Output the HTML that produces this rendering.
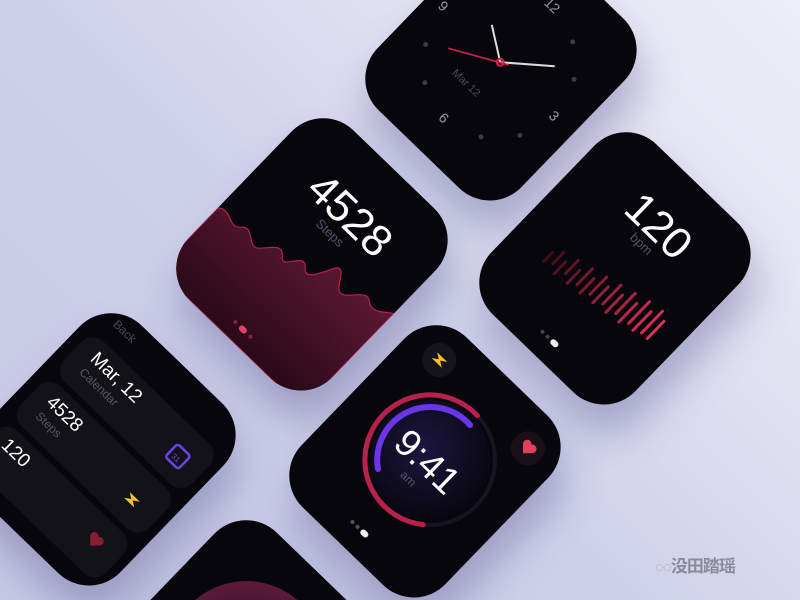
<!DOCTYPE html>
<html><head><meta charset="utf-8"><style>
html,body{margin:0;padding:0;width:800px;height:600px;overflow:hidden}
#w{position:absolute;left:0;top:0;width:800px;height:600px;overflow:hidden;font-family:"Liberation Sans","Noto Sans CJK SC",sans-serif;
background:linear-gradient(225deg,#eeeef8 0%,#e2e2f3 28%,#cfd0ea 55%,#c6c8e5 100%);}
.card{position:absolute;width:200px;height:236px;border-radius:44px;background:#07060c;transform-origin:0 0;transform:rotate(44deg);overflow:hidden;box-shadow:22px 18px 40px rgba(70,70,130,.35);}
.t{position:absolute;color:#fff;white-space:nowrap;transform:translate(-50%,-50%);font-weight:300}
.g{color:#55546a}
.row{position:absolute;left:12px;width:178px;height:56px;border-radius:16px;background:#131219}
svg{position:absolute;left:0;top:0}
</style></head><body><div id="w">

<!-- clock -->
<div class="card" style="left:511px;top:-90px">
<svg width="200" height="236">
 <g fill="#3a3a48">
  <circle cx="136" cy="52" r="2.5"/><circle cx="163" cy="78" r="2.5"/>
  <circle cx="163" cy="156" r="2.5"/><circle cx="136" cy="184" r="2.5"/>
  <circle cx="58" cy="184" r="2.5"/><circle cx="32" cy="156" r="2.5"/>
  <circle cx="32" cy="78" r="2.5"/><circle cx="58" cy="52" r="2.5"/>
 </g>
 <line x1="98" y1="117" x2="66" y2="96" stroke="#ddd" stroke-width="2"/>
 <line x1="98" y1="117" x2="140" y2="82" stroke="#ddd" stroke-width="2"/>
 <line x1="106" y1="113" x2="51" y2="143" stroke="#d0204a" stroke-width="1.6"/>
 <circle cx="98" cy="117" r="3.5" fill="none" stroke="#d0204a" stroke-width="2"/>
</svg>
<div class="t g" style="left:96px;top:40px;font-size:14px;color:#9a99a8">12</div>
<div class="t g" style="left:174px;top:118px;font-size:14px;color:#9a99a8">3</div>
<div class="t g" style="left:96px;top:196px;font-size:14px;color:#9a99a8">6</div>
<div class="t g" style="left:18px;top:116px;font-size:14px;color:#9a99a8">9</div>
<div class="t g" style="left:88px;top:156px;font-size:11px;color:#4a4958">Mar 12</div>
</div>

<!-- steps -->
<div class="card" style="left:322px;top:100px">
<svg width="200" height="236">
 <defs><linearGradient id="wv" x1="0" y1="0" x2="0" y2="1"><stop offset="0" stop-color="#5c1832"/><stop offset="1" stop-color="#2a0a18"/></linearGradient></defs>
 <path d="M0,150 C12,140 20,158 30,148 C40,136 48,160 58,150 C66,142 72,130 80,140 C88,152 94,120 104,132 C112,142 118,128 126,112 C134,100 140,128 148,126 C158,124 164,104 174,112 C184,120 192,108 200,104 L200,236 L0,236Z" fill="url(#wv)" stroke="#b8204c" stroke-width="1.2"/>
 <circle cx="92" cy="220" r="2" fill="#7a2840"/><rect x="98" y="217" width="9" height="6" rx="3" fill="#e0406a"/><circle cx="113" cy="220" r="2" fill="#7a2840"/>
</svg>
<div class="t" style="left:100px;top:64px;font-size:44px">4528</div>
<div class="t g" style="left:98px;top:90px;font-size:13px">Steps</div>
</div>

<!-- bpm -->
<div class="card" style="left:625px;top:114px">
<svg width="200" height="236">
 <defs><linearGradient id="br" gradientUnits="userSpaceOnUse" x1="40" y1="0" x2="175" y2="0"><stop offset="0" stop-color="#3a0c18"/><stop offset="1" stop-color="#e0305a"/></linearGradient></defs>
 <g stroke="url(#br)" stroke-width="3" stroke-linecap="round">
  <line x1="44" y1="150" x2="44" y2="162"/><line x1="52" y1="142" x2="52" y2="158"/>
  <line x1="60" y1="148" x2="60" y2="164"/><line x1="68" y1="138" x2="68" y2="156"/>
  <line x1="76" y1="144" x2="76" y2="162"/><line x1="84" y1="134" x2="84" y2="156"/>
  <line x1="92" y1="140" x2="92" y2="160"/><line x1="100" y1="130" x2="100" y2="154"/>
  <line x1="108" y1="136" x2="108" y2="158"/><line x1="116" y1="126" x2="116" y2="152"/>
  <line x1="124" y1="132" x2="124" y2="156"/><line x1="132" y1="122" x2="132" y2="150"/>
  <line x1="140" y1="128" x2="140" y2="154"/><line x1="148" y1="118" x2="148" y2="148"/>
  <line x1="156" y1="124" x2="156" y2="150"/><line x1="164" y1="116" x2="164" y2="146"/>
  <line x1="172" y1="122" x2="172" y2="146"/>
 </g>
 <circle cx="92" cy="214" r="2" fill="#444"/><circle cx="99" cy="214" r="2" fill="#444"/><rect x="104" y="211" width="9" height="6" rx="3" fill="#eee"/>
</svg>
<div class="t" style="left:102px;top:58px;font-size:44px">120</div>
<div class="t g" style="left:102px;top:82px;font-size:13px">bpm</div>
</div>

<!-- 9:41 -->
<div class="card" style="left:435px;top:307px">
<svg width="200" height="236">
 <circle cx="40" cy="35" r="17" fill="#15141c"/>
 <path d="M33,31 L47,31 L41,35 L47,39 L33,39 L39,35Z" fill="#f4c21c"/>
 <circle cx="165" cy="37" r="17" fill="#1a0f17"/>
 <path d="M165,44 L158,37 A4,4 0 0 1 165,32 A4,4 0 0 1 172,37Z" fill="#e0405e"/>
 <circle cx="90" cy="212" r="2" fill="#555"/><circle cx="97" cy="212" r="2" fill="#555"/><rect x="102" y="209" width="9" height="6" rx="3" fill="#eee"/>
</svg>
</div>
<svg width="800" height="600" style="pointer-events:none">
 <defs><radialGradient id="ic" cx=".45" cy=".4" r=".6"><stop offset="0" stop-color="#1c1640"/><stop offset="1" stop-color="#08070f"/></radialGradient></defs>
 <circle cx="430" cy="460" r="60" fill="url(#ic)"/>
 <circle cx="430" cy="460" r="65" fill="none" stroke="#151420" stroke-width="4"/>
 <path d="M477.5,415.7 A65,65 0 1 0 423.2,524.6" fill="none" stroke="#b8204e" stroke-width="5" stroke-linecap="round"/>
 <path d="M470,425 A53,53 0 0 0 378,469" fill="none" stroke="#6a36e8" stroke-width="6" stroke-linecap="round"/>
</svg>
<div style="position:absolute;left:435px;top:307px;width:200px;height:236px;transform-origin:0 0;transform:rotate(44deg)">
<div class="t" style="left:102px;top:118px;font-size:38px">9:41</div>
<div class="t g" style="left:100px;top:142px;font-size:12px">am</div>
</div>

<!-- calendar list -->
<div class="card" style="left:110px;top:295px">
<div class="t g" style="left:36px;top:16px;font-size:12px;color:#4a4958">Back</div>
<div class="row" style="top:38px"></div>
<div class="row" style="top:100px"></div>
<div class="row" style="top:162px"></div>
<div class="t" style="left:62px;top:56px;font-size:19px">Mar, 12</div>
<div class="t g" style="left:56px;top:74px;font-size:12px">Calendar</div>
<div class="t" style="left:50px;top:118px;font-size:19px">4528</div>
<div class="t g" style="left:46px;top:136px;font-size:12px">Steps</div>
<div class="t" style="left:42px;top:180px;font-size:19px">120</div>
<svg width="200" height="236">
 <rect x="152" y="60" width="18" height="18" rx="3" fill="none" stroke="#6a44e8" stroke-width="2.5"/>
 <text x="156" y="74" font-size="8" fill="#6a44e8" font-family="Liberation Sans">31</text>
 <path d="M151,128 L165,128 L159,132 L165,136 L151,136 L157,132Z" fill="#f4c21c"/>
 <path d="M160,194 L153,187 A4,4 0 0 1 160,182 A4,4 0 0 1 167,187Z" fill="#8a1c34"/>
</svg>
</div>

<!-- bottom -->
<div class="card" style="left:245px;top:502px">
<svg width="200" height="236">
 <defs><radialGradient id="bc"><stop offset="0" stop-color="#2a0c22"/><stop offset="1" stop-color="#5a1a38"/></radialGradient></defs>
 <circle cx="110" cy="112" r="78" fill="url(#bc)"/>
</svg>
</div>

<div style="position:absolute;left:655px;top:552px;color:#8a8a98;font-size:17px;font-weight:bold;letter-spacing:-1px">
<span style="color:#a0a0ae;font-size:15px">◌◌</span>没田踏瑶</div>
</div></body></html>
